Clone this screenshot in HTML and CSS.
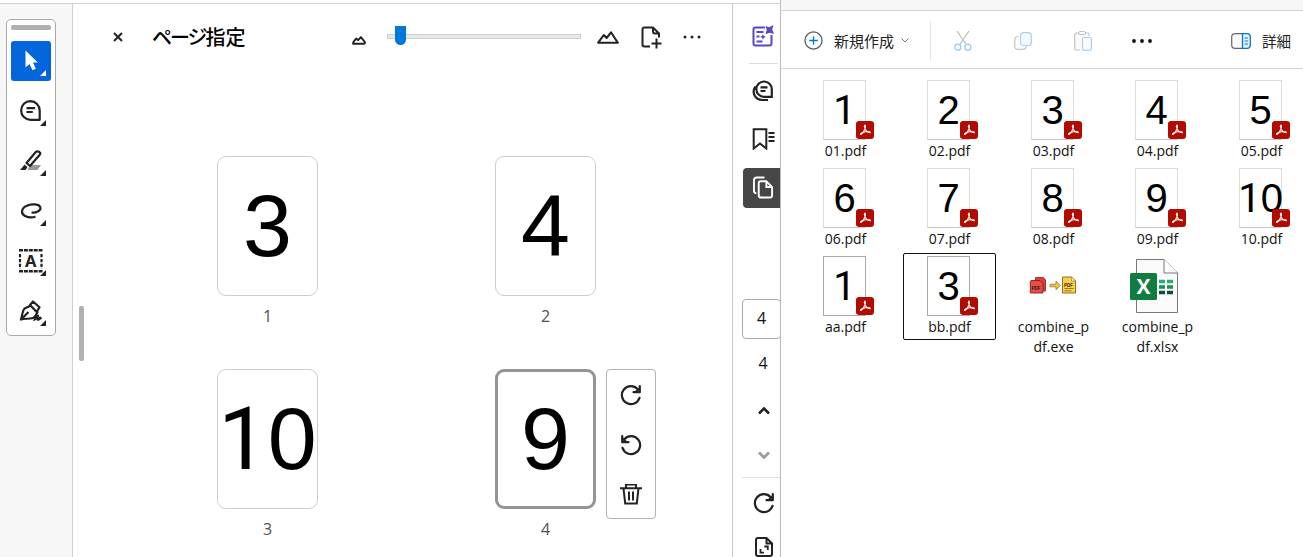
FILE: index.html
```
<!DOCTYPE html>
<html lang="ja">
<head>
<meta charset="utf-8">
<title>ページ指定</title>
<link rel="stylesheet" href="styles.css">
</head>
<body>
<svg class="defs" aria-hidden="true">
  <symbol id="pdf" viewBox="0 0 18 18"><rect width="18" height="18" rx="3.2" fill="#b30b00"/><path d="M9 4.200c-1-.3-.7 2.400.2 4 1 1.900 3 3.500 4.900 3.500 1.400-.8-2-1.500-4.600-1-2.600.4-5.300 1.700-5 2.700 1.200.7 3.200-2.800 4.200-5.200.6-1.600.9-3.700.3-4z" fill="none" stroke="#fff" stroke-width="1.100"/></symbol>
  <symbol id="rotate" viewBox="0 0 22 22"><path d="M19.500 13.800A9 9 0 1 1 17.700 5.200" fill="none" stroke="#222" stroke-width="2.200" stroke-linecap="round"/><path d="M19.800 2.200v6h-6.300" fill="none" stroke="#222" stroke-width="2.200" stroke-linejoin="round" stroke-linecap="round"/><path d="M18.800 3.600v3.600h-3.700z" fill="#222"/></symbol>
</svg>
<div class="screen">
  <section class="acrobat">
    <aside class="tools">
      <div class="palette">
        <i class="handle"></i>
        <button class="tool active"><svg viewBox="0 0 40 40"><path d="M14.500 9.500v17l4-3.600 3 6.300 3.300-1.500-2.800-6.200h4.800z" fill="#fff"/><path d="M35 29v6h-6z" fill="#fff"/></svg></button>
        <button class="tool"><svg viewBox="0 0 40 40"><path d="M19.500 10.100a9.300 9.300 0 1 0 0 18.700h9.200v-9.300a9.300 9.300 0 0 0-9.200-9.400zM15.500 17.200h8.700M15.500 21h6.300"/><path class="corner" d="M35 29v6h-6z"/></svg></button>
        <button class="tool"><svg viewBox="0 0 40 40"><path d="M20 24h10l-3.500 5H16z" fill="#999" stroke="none"/><path d="M15.500 22l9.500-11.300q2.300-1.300 4.300 1.300-.2 1.500-1 2.300L19 25z"/><path d="M13.500 23.500l3 2.800-2 2.700H9q2.500-2.500 4.500-5.500z" fill="#222" stroke="none"/><path class="corner" d="M35 29v6h-6z"/></svg></button>
        <button class="tool"><svg viewBox="0 0 40 40"><path d="M20.500 21.500c5 .6 10-2.200 8.800-5.300-1.200-3.200-8-3.700-13.300-1.500-6 2.400-6.500 8-2 10.300 3 1.500 7 1.800 10.500.8" fill="none"/><path class="corner" d="M35 29v6h-6z"/></svg></button>
        <button class="tool"><svg viewBox="0 0 40 40"><path d="M8 9.300h23.500M8 30.200h23.500" stroke-width="2.500" stroke-dasharray="4 .9"/><path d="M9 13v15M30.500 13v15" stroke-dasharray="3.300 1.600"/><text x="19.700" y="25.500">A</text><path class="corner" d="M35 29v6h-6z"/></svg></button>
        <button class="tool"><svg viewBox="0 0 40 40"><path d="M10 28.500c1.500-4 .8-8.300 3.500-11l6.500-3 6.500 6.500c-1.500 3-2 5-4.500 6-4 1.500-8 0-12 1.500zl7.500-7.500"/><path d="M19 14l3-3.500 6.500 5.800-3 4.500zM22.500 29c2 .5 3-4.500 4.500-4.300-1 2-1 4.300.5 4 1.500-.5.5-2.200 1.700-2.100l1 1.600"/><path class="corner" d="M35 29v6h-6z"/></svg></button>
      </div>
    </aside>
    <main class="organizer">
      <header class="bar">
        <svg class="close" viewBox="0 0 10 10"><path d="M1 1l8 8M9 1L1 9" stroke="#222" stroke-width="2"/></svg>
        <h1><span>ページ</span>指定</h1>
        <svg class="small-hill" viewBox="0 0 22 14"><path d="M1.700 12q0-2 1.500-4l3.500-4 3 2.500L14 1.700l6 7.300q1 3-1 3z" fill="none" stroke="#222" stroke-width="3" stroke-linejoin="round"/></svg>
        <div class="slider"><i></i></div>
        <svg class="big-hill" viewBox="0 0 22 13"><path d="M1.200 11.700L6.800 4l2.800 3L14 1.300l6.800 10.400z" fill="none" stroke="#222" stroke-width="2.100" stroke-linejoin="round"/></svg>
        <svg class="add" viewBox="0 0 21 23"><path d="M9 20.500H3.500Q1.500 20.500 1.500 18.500V3.500q0-2 2-2H12l6 6v4M12 1.500v4q0 2 2 2h4M10.500 17.500h10M15.500 12.500v10" fill="none" stroke="#222" stroke-width="2"/></svg>
        <svg class="more" viewBox="0 0 18 4"><circle cx="2" cy="2" r="1.500"/><circle cx="9" cy="2" r="1.500"/><circle cx="16" cy="2" r="1.500"/></svg>
      </header>
      <div class="body">
        <i class="scroll"></i>
        <div class="pages">
          <figure><div class="page"><span>3</span></div><figcaption>1</figcaption></figure>
          <figure><div class="page"><span>4</span></div><figcaption>2</figcaption></figure>
          <figure><div class="page"><span><b>1</b>0</span></div><figcaption>3</figcaption></figure>
          <figure><div class="page selected"><span>9</span></div><figcaption>4</figcaption>
            <div class="actions">
              <svg viewBox="0 0 22 22"><use href="#rotate"/></svg>
              <svg class="flip" viewBox="0 0 22 22"><use href="#rotate"/></svg>
              <svg viewBox="0 0 22 22"><path d="M0 4.300h22M6 4.500V.5h10v4M3.500 4.500l1.700 15h11.600l1.700-15M9 7.500v9M13 7.500v9" fill="none" stroke="#222" stroke-width="2"/></svg>
            </div>
          </figure>
        </div>
      </div>
    </main>
    <nav class="rail">
      <svg class="ai" viewBox="0 0 22 22"><path d="M13 2.500H3.500Q1.500 2.500 1.500 4.500v14q0 2 2 2h14q2 0 2-2V10" fill="none" stroke="#5549c8" stroke-width="2"/><path d="M4.500 7h7M4.500 11.500h3M4.500 16.500h6" stroke="#5549c8" stroke-width="1.800"/><path d="M13.500 1l3.700 1.200L21.500 0l-1.300 4.500L22 9l-4.300-1.200-4.200 1.500 1.200-4.300zM11 9l.9 1.900 2 .9-2 .9-.9 2-.9-2-2-.9 2-.9z" fill="#5549c8"/></svg>
      <hr>
      <svg class="notes" viewBox="0 0 22 22"><path d="M12 1.500a7.600 7.600 0 1 0 0 15.300h7.800V9.300A7.700 7.700 0 0 0 12 1.500zM8.500 7.300h7M8.500 11h5M3.500 6.500C-.5 12 2.500 20 10.500 20H16" fill="none" stroke="#222" stroke-width="2.200"/></svg>
      <svg class="marks" viewBox="0 0 22 22"><path d="M1.200 1.200h12.600v19.300L7.500 15.500l-6.300 5zM16 5h6M16 9h6M16 13h6" fill="none" stroke="#222" stroke-width="2"/></svg>
      <div class="thumbs"><svg viewBox="0 0 22 24"><path d="M3.500 18q-2.500 0-2.500-2.500V4.500Q1 1.500 4 1.500h8M7.500 5.500H14l6 6v9q0 2-2 2H8.500q-2.500 0-2.500-2.500V7.500q0-2 2-2zM14 5.500v6h6" fill="none" stroke="#fff" stroke-width="2"/></svg></div>
      <div class="field">4</div>
      <div class="total">4</div>
      <svg class="chev up" viewBox="0 0 12 8"><path d="M1 6.500l5-5 5 5" fill="none" stroke="#222" stroke-width="2.600"/></svg>
      <svg class="chev down" viewBox="0 0 12 8"><path d="M1 1.500l5 5 5-5" fill="none" stroke="#999" stroke-width="2.600"/></svg>
      <hr class="wide">
      <svg class="turn" viewBox="0 0 22 22"><use href="#rotate"/></svg>
      <svg class="fit" viewBox="0 0 18 20"><path d="M3 1h8.500L17 6.500V17q0 2-2 2H3q-2 0-2-2V3q0-2 2-2zM11.500 1v5.500H17" fill="none" stroke="#222" stroke-width="2"/><path d="M9.300 9.500h3.500V13M5.500 12v3.700H9" fill="none" stroke="#222" stroke-width="1.800"/></svg>
    </nav>
  </section>
  <section class="explorer">
    <div class="tabs"></div>
    <header class="commands">
      <svg class="new" viewBox="0 0 20 20"><circle cx="10" cy="10" r="9" fill="none" stroke="#555" stroke-width="1.300"/><path d="M10 5.500v9M5.500 10h9" stroke="#0078d4" stroke-width="1.400"/></svg>
      <span class="new-label">新規作成</span>
      <svg class="caret" viewBox="0 0 8 5"><path d="M.5.5L4 4 7.500.5" fill="none" stroke="#777"/></svg>
      <i class="rule"></i>
      <svg class="cut" viewBox="0 0 18 20"><path d="M3 0l9.500 14M15 0L5.500 14" stroke="#bcbcbc" stroke-width="1.200"/><circle cx="3.800" cy="16.200" r="3" fill="none" stroke="#9bcbef" stroke-width="1.300"/><circle cx="13.800" cy="16.200" r="3" fill="none" stroke="#9bcbef" stroke-width="1.300"/></svg>
      <svg class="copy" viewBox="0 0 18 18"><path d="M4.500 4.500Q.7 4.500.7 8v6q0 3.300 3.300 3.300h4.500q3.500 0 3.700-3.200" fill="none" stroke="#c4c4c4" stroke-width="1.200"/><rect x="6.500" y=".7" width="10.800" height="12.800" rx="2.800" fill="#f6f9fc" stroke="#a9d1f0" stroke-width="1.200"/></svg>
      <svg class="paste" viewBox="0 0 18 20"><path d="M6 19H2.500Q.7 19 .7 17.500V3.500Q.7 2 2.500 2h11.200Q15 2 15 3.500V5" fill="#fafafa" stroke="#c4c4c4" stroke-width="1.200"/><rect x="4.500" y=".6" width="7" height="3" rx="1.500" fill="#fff" stroke="#bcbcbc"/><rect x="8.500" y="6.500" width="8.900" height="12.800" rx="1.500" fill="#f8fafc" stroke="#a9d1f0" stroke-width="1.200"/></svg>
      <svg class="dots" viewBox="0 0 20 4"><circle cx="2" cy="2" r="1.900"/><circle cx="10" cy="2" r="1.900"/><circle cx="18" cy="2" r="1.900"/></svg>
      <svg class="pane" viewBox="0 0 20 16"><path d="M11 .7H4Q.7.7.7 4v8q0 3.300 3.300 3.300h7" fill="#fafafa" stroke="#666" stroke-width="1.200"/><path d="M11.500.7H16q3.300 0 3.300 3.300v8q0 3.300-3.300 3.300h-4.500z" fill="#e3f2fc" stroke="#0078d4" stroke-width="1.300"/><path d="M13.700 5h3.200M13.700 8h3.200M13.700 11h3.200" stroke="#0078d4" stroke-width="1.200"/></svg>
      <span>詳細</span>
    </header>
    <div class="files">
      <div class="file"><div class="doc"><span><b>1</b></span><svg><use href="#pdf"/></svg></div><p>01.pdf</p></div>
      <div class="file"><div class="doc"><span>2</span><svg><use href="#pdf"/></svg></div><p>02.pdf</p></div>
      <div class="file"><div class="doc"><span>3</span><svg><use href="#pdf"/></svg></div><p>03.pdf</p></div>
      <div class="file"><div class="doc"><span>4</span><svg><use href="#pdf"/></svg></div><p>04.pdf</p></div>
      <div class="file"><div class="doc"><span>5</span><svg><use href="#pdf"/></svg></div><p>05.pdf</p></div>
      <div class="file"><div class="doc"><span>6</span><svg><use href="#pdf"/></svg></div><p>06.pdf</p></div>
      <div class="file"><div class="doc"><span>7</span><svg><use href="#pdf"/></svg></div><p>07.pdf</p></div>
      <div class="file"><div class="doc"><span>8</span><svg><use href="#pdf"/></svg></div><p>08.pdf</p></div>
      <div class="file"><div class="doc"><span>9</span><svg><use href="#pdf"/></svg></div><p>09.pdf</p></div>
      <div class="file"><div class="doc"><span><b>1</b>0</span><svg><use href="#pdf"/></svg></div><p>10.pdf</p></div>
      <div class="file"><div class="doc dark"><span><b>1</b></span><svg><use href="#pdf"/></svg></div><p>aa.pdf</p></div>
      <div class="file focus"><div class="doc dark"><span>3</span><svg><use href="#pdf"/></svg></div><p>bb.pdf</p></div>
      <div class="file"><svg class="art exe" viewBox="0 0 48 60">
        <path d="M6.500 21.500h8l2 2.500v11h-10z" fill="#e04038" stroke="#7b2320" stroke-width=".8"/>
        <path d="M2 24.500h9l3 3V37H1.300V25.500z" fill="#ee4c43" stroke="#7b2320" stroke-width=".9"/><text x="2.500" y="33.500" class="tiny">PDF</text>
        <path d="M21 28.200h6v-3l4.300 4.300-4.300 4.300v-3h-6z" fill="#f5c63a" stroke="#86681b" stroke-width=".7"/>
        <path d="M33.500 21h9l4 4v12h-13z" fill="#fdd045" stroke="#80651c" stroke-width=".9"/><path d="M42.500 21v4h4z" fill="#fff0a8" stroke="#80651c" stroke-width=".5"/><text x="35" y="30.500" class="tiny">PDF</text><path d="M35.500 32.500h9M35.500 34.800h7" stroke="#80651c" stroke-width=".8"/></svg><p>combine_p<br>df.exe</p></div>
      <div class="file"><svg class="art xls" viewBox="0 0 48 60">
        <path d="M6.500 3.500H34L47.500 17v39.500h-41z" fill="#fafafa" stroke="#777"/><path d="M34 3.500V17h13.500" fill="#fff" stroke="#777"/>
        <rect y="17" width="27" height="27" rx="1.500" fill="#107c41"/><text x="13.500" y="38" class="ex">X</text>
        <path d="M29 25.500h6M37 25.500h6" stroke="#27ae6b" stroke-width="3.500"/><path d="M29 31h6M37 31h6" stroke="#159257" stroke-width="3.500"/><path d="M29 36.500h6M37 36.500h6" stroke="#124d2f" stroke-width="3.500"/></svg><p>combine_p<br>df.xlsx</p></div>
    </div>
  </section>
</div>
</body>
</html>
```
FILE: styles.css
```
* { box-sizing: border-box; }
body, h1, p, figure, hr { margin: 0; }
body { background: #fff; font-family: "Open Sans", "Noto Sans CJK JP", sans-serif; color: #111; }
svg { display: block; flex: none; }
.defs { position: absolute; width: 0; height: 0; }
.screen { display: flex; width: 1303px; height: 557px; overflow: hidden; }

.acrobat { display: grid; grid-template-columns: 73px 660px 47px; width: 780px; height: 557px; padding-top: 3px; }
.tools { border-top: 1px solid #d0d0d0; border-right: 1px solid #d0d0d0; background: #f7f7f7; padding: 15px 0 0 6px; }
.palette { display: flex; flex-direction: column; align-items: center; gap: 10px; width: 50px; height: 317px; padding-top: 5px; border: 1px solid #aaa; border-radius: 5px; background: #fff; }
.handle { width: 40px; height: 5px; border-radius: 2px; background: #b0b0b0; }
.handle + .tool { margin-top: 1px; }
.tool { flex: none; width: 40px; height: 40px; padding: 0; border: 0; border-radius: 3px; background: none; }
.tool.active { background: #0265dc; }
.tool svg { width: 40px; height: 40px; fill: #fff; stroke: #222; stroke-width: 2.2; stroke-linejoin: round; stroke-linecap: butt; }
.tool.active svg { stroke: none; }
.tool .corner { fill: #222; stroke: none; }
.tool text { font: bold 16.500px "Noto Sans", sans-serif; fill: #222; stroke: none; text-anchor: middle; }

.organizer { border-top: 1px solid #d0d0d0; border-right: 1px solid #c9c9c9; }
.bar { display: flex; align-items: center; height: 66px; padding-left: 40px; }
.close { width: 10px; height: 10px; }
.bar h1 { width: 200px; margin-left: 29px; font: 500 20px/28px "Noto Sans CJK JP", sans-serif; color: #000; white-space: nowrap; }
.bar h1 span { letter-spacing: -2px; }
.small-hill { width: 14px; height: 9px; margin-top: 6px; }
.slider { position: relative; width: 194px; height: 5px; margin: -1px 0 0 21px; border: 1px solid #ccd0d0; background: #e6e9e9; }
.slider i { position: absolute; left: 7px; top: -9px; width: 11px; height: 19px; background: #0078d7; border-radius: 0 0 6px 6px; }
.big-hill { width: 22px; height: 13px; margin-left: 16px; }
.add { width: 21px; height: 23px; margin-left: 22px; }
.more { width: 18px; height: 4px; margin: -1px 0 0 21px; fill: #222; }
.body { display: flex; height: 487px; }
.scroll { flex: none; width: 5px; height: 55px; margin: 236px 0 0 6px; border-radius: 2px; background: #b1b1b1; }
.pages { display: grid; grid-template-columns: 278px 278px; grid-auto-rows: 213px; align-content: start; margin: 86px 0 0 133px; }
figure { position: relative; width: 101px; }
.page { display: flex; align-items: center; justify-content: center; height: 140px; border: 1px solid #ccc; border-radius: 9px; font: 88px/88px "Liberation Sans", Arial, sans-serif; color: #000; }
.page span, .doc span { flex: none; white-space: nowrap; }
.page span { height: 88px; }
.doc span { height: 58px; }
.page b, .doc b { font-family: Roboto, sans-serif; font-weight: 400; line-height: 0; }
.page.selected { border: 3px solid #949494; }
figcaption { height: 24px; margin-top: 8px; font-size: 16px; line-height: 24px; text-align: center; color: #505050; }
.actions { position: absolute; left: 111px; top: 0; display: flex; flex-direction: column; align-items: center; gap: 28px; width: 50px; height: 150px; padding-top: 14px; border: 1px solid #b1b1b1; border-radius: 4px; background: #fff; }
.actions svg { width: 22px; height: 22px; }
.flip { transform: scaleX(-1); }

.rail { display: flex; flex-direction: column; align-items: flex-start; overflow: hidden; border-top: 1px solid #d0d0d0; }
.rail > * { flex: none; }
.rail hr { width: 29px; height: 1px; margin: 16px 0 0 16px; border: 0; background: #ddd; }
.ai { width: 22px; height: 22px; margin: 21px 0 0 19px; }
.notes { width: 22px; height: 22px; margin: 16px 0 0 19px; }
.marks { width: 23px; height: 22px; margin: 26px 0 0 19px; }
.thumbs { width: 38px; height: 40px; margin: 18px 0 0 10px; padding: 8px 10px; border-radius: 4px 0 0 4px; background: #464646; }
.thumbs svg { width: 21px; height: 23px; }
.field, .total { font-size: 16px; text-align: center; }
.field { width: 39px; height: 40px; margin: 91px 0 0 9px; border: 1px solid #aaa; border-radius: 4px; line-height: 37px; }
.total { width: 20px; height: 24px; margin: 12px 0 0 20px; line-height: 24px; }
.chev { width: 12px; height: 8px; margin-left: 25px; }
.up { margin-top: 32px; }
.down { margin-top: 36px; }
.rail hr.wide { width: 38px; margin: 18px 0 0 9px; }
.turn { width: 22px; height: 22px; margin: 14px 0 0 20px; }
.fit { width: 18px; height: 20px; margin: 23px 0 0 22px; }

.explorer { width: 523px; border-left: 1px solid #bbb; background: #fff; }
.tabs { height: 11px; border-bottom: 1px solid #d2d2d2; background: #f7f7f7; }
.commands { display: flex; align-items: center; height: 58px; padding: 2px 0 0 23px; border-bottom: 1px solid #d2d2d2; font: 400 14.500px/22px "Noto Sans CJK JP", sans-serif; color: #222; white-space: nowrap; }
.new { width: 19px; height: 19px; }
.new-label { width: 60px; margin-left: 11px; font-size: 15px; }
.caret { width: 8px; height: 5px; margin-left: 7px; }
.rule { width: 1px; height: 39px; margin-left: 21px; background: #e5e5e5; }
.cut { width: 18px; height: 20px; margin-left: 23px; }
.copy { width: 18px; height: 18px; margin-left: 42px; }
.paste { width: 18px; height: 20px; margin-left: 42px; }
.dots { width: 20px; height: 4px; margin-left: 40px; fill: #111; }
.pane { width: 20px; height: 16px; margin: 0 11px 0 79px; }
.files { display: grid; grid-template-columns: repeat(5, 93px); grid-auto-rows: 87px; gap: 1px 11px; padding: 8px 0 0 18px; }
.file { display: flex; flex-direction: column; align-items: center; padding-top: 3px; font-size: 14px; line-height: 20px; text-align: center; }
.focus { padding-top: 2px; border: 1px solid #111; border-radius: 2px; }
.doc { position: relative; display: flex; flex: none; justify-content: center; width: 43px; height: 60px; margin-right: 2px; border: 1px solid #ddd; border-bottom-color: #c8c8c8; font: 40px/58px "Liberation Sans", Arial, sans-serif; color: #000; }
.doc.dark { border-color: #aaa; }
.doc svg { position: absolute; left: 32px; top: 40px; width: 18px; height: 18px; }
.art { width: 48px; height: 60px; }
.exe { margin-right: 2px; }
.xls { margin-right: 8px; }
.file p { margin-top: 1px; }
.tiny { font: bold 4.500px "Liberation Sans", sans-serif; fill: #222; }
.ex { font: bold 21px "Open Sans", sans-serif; fill: #fff; text-anchor: middle; }
```
